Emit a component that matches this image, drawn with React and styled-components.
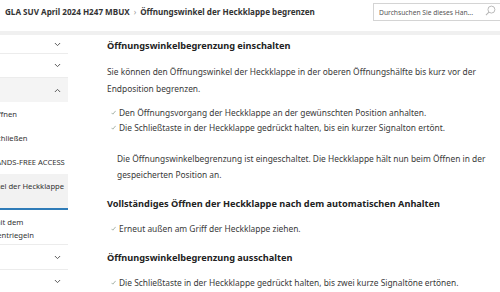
import styled, { createGlobalStyle } from "styled-components";

const GlobalStyle = createGlobalStyle`
  * { box-sizing: border-box; }
  html, body { margin: 0; padding: 0; background: #fff; }
  body {
    width: 500px;
    height: 292px;
    overflow: hidden;
    font-family: "Noto Sans", "Open Sans", sans-serif;
    color: #333;
  }
`;

const sideItems = [
  { type: "top", label: "Schlüssel", h: 19 },
  { type: "top", label: "Türen", h: 24 },
  { type: "open", label: "Heckklappe", h: 24 },
  { type: "sub", label: "Heckklappe öffnen" },
  { type: "sub", label: "Heckklappe schließen" },
  { type: "sub", label: "Öffnen mit HANDS-FREE ACCESS" },
  { type: "active", label: "Öffnungswinkel der Heckklappe begrenzen" },
  { type: "sub2", label: "Heckklappe mit dem Notschlüssel entriegeln" },
  { type: "top", label: "Fenster", h: 26, first: true },
  { type: "top", label: "Schiebedach", h: 24 },
];

const steps1 = [
  "Den Öffnungsvorgang der Heckklappe an der gewünschten Position anhalten.",
  "Die Schließtaste in der Heckklappe gedrückt halten, bis ein kurzer Signalton ertönt.",
];

export default function App() {
  return (
    <>
      <GlobalStyle />
      <Page>
        <Header>
          <Breadcrumb>
            <Crumb>GLA SUV April 2024 H247 MBUX</Crumb>
            <Sep>›</Sep>
            <Crumb>Öffnungswinkel der Heckklappe begrenzen</Crumb>
          </Breadcrumb>
          <SearchBox>
            <SearchText>Durchsuchen Sie dieses Han...</SearchText>
            <SearchIcon />
          </SearchBox>
        </Header>
        <Body>
          <Sidebar>
            <SideList>
              {sideItems.map((it) =>
                it.type === "top" || it.type === "open" ? (
                  <TopItem key={it.label} $h={it.h} $open={it.type === "open"} $first={it.first}>
                    <TopLabel>{it.label}</TopLabel>
                    <Chevron up={it.type === "open"} />
                  </TopItem>
                ) : (
                  <SubItem key={it.label} $active={it.type === "active"} $multi={it.type !== "sub"}>
                    {it.label}
                  </SubItem>
                )
              )}
            </SideList>
          </Sidebar>
          <Main>
            <Heading>Öffnungswinkelbegrenzung einschalten</Heading>
            <Text>
              Sie können den Öffnungswinkel der Heckklappe in der oberen Öffnungshälfte bis kurz vor der
              Endposition begrenzen.
            </Text>
            <Steps>
              {steps1.map((s) => (
                <Step key={s}>
                  <Check />
                  <span>{s}</span>
                </Step>
              ))}
            </Steps>
            <Note>
              Die Öffnungswinkelbegrenzung ist eingeschaltet. Die Heckklappe hält nun beim Öffnen in der
              gespeicherten Position an.
            </Note>
            <Heading>Vollständiges Öffnen der Heckklappe nach dem automatischen Anhalten</Heading>
            <Steps>
              <Step>
                <Check />
                <span>Erneut außen am Griff der Heckklappe ziehen.</span>
              </Step>
            </Steps>
            <Heading>Öffnungswinkelbegrenzung ausschalten</Heading>
            <Steps>
              <Step>
                <Check />
                <span>Die Schließtaste in der Heckklappe gedrückt halten, bis zwei kurze Signaltöne ertönen.</span>
              </Step>
            </Steps>
          </Main>
        </Body>
      </Page>
    </>
  );
}

function Chevron({ up }) {
  return (
    <ChevronSvg viewBox="0 0 8 5" width="7" height="5">
      <polyline
        points={up ? "1,4.2 4,1.2 7,4.2" : "1,0.8 4,3.8 7,0.8"}
        fill="none"
        stroke="#555"
        strokeWidth="1.1"
      />
    </ChevronSvg>
  );
}

function Check() {
  return (
    <CheckSvg viewBox="0 0 6 6" width="5" height="5">
      <polyline points="0.6,3.4 2.2,5 5.6,1" fill="none" stroke="#8a9c8e" strokeWidth="0.9" />
    </CheckSvg>
  );
}

function SearchIcon() {
  return (
    <IconSvg viewBox="0 0 12 12" width="11" height="11">
      <circle cx="7" cy="5" r="3.8" fill="none" stroke="#b5b5b5" strokeWidth="1" />
      <line x1="4.3" y1="7.7" x2="1" y2="11" stroke="#b5b5b5" strokeWidth="1.1" />
    </IconSvg>
  );
}

const Page = styled.div`
  display: flex;
  flex-direction: column;
  height: 292px;
`;

const Header = styled.header`
  height: 35px;
  flex-shrink: 0;
  display: flex;
  align-items: flex-start;
  justify-content: space-between;
  padding: 3px 0 0 5px;
  border-bottom: 4px solid #f0f0f0;
`;

const Breadcrumb = styled.div`
  display: flex;
  align-items: center;
  gap: 4px;
  height: 17px;
  font-size: 8.1px;
  font-weight: 700;
  color: #333;
`;

const Crumb = styled.span`
  white-space: nowrap;
`;

const Sep = styled.span`
  color: #999;
  font-weight: 400;
`;

const SearchBox = styled.div`
  width: 133px;
  height: 18px;
  margin-right: -6px;
  flex-shrink: 0;
  display: flex;
  align-items: center;
  padding: 0 9px 0 5px;
  border: 1px solid #d4d4d4;
`;

const SearchText = styled.span`
  font-size: 6.7px;
  color: #555;
  white-space: nowrap;
`;

const IconSvg = styled.svg`
  display: block;
  flex-shrink: 0;
  margin: -4px 0 0 auto;
`;

const Body = styled.div`
  flex: 1;
  display: flex;
  min-height: 0;
`;

const Sidebar = styled.nav`
  width: 68px;
  flex-shrink: 0;
  overflow: hidden;
  display: flex;
  justify-content: flex-end;
`;

const SideList = styled.div`
  flex: 0 0 130px;
  display: flex;
  flex-direction: column;
`;

const TopItem = styled.div`
  height: ${(p) => p.$h}px;
  flex-shrink: 0;
  display: flex;
  align-items: center;
  justify-content: space-between;
  padding: 0 7px 0 12px;
  background: ${(p) => (p.$open ? "#f4f4f4" : "#fff")};
  border-bottom: ${(p) => (p.$open ? "none" : "1px solid #ececec")};
  border-top: ${(p) => (p.$first ? "1px solid #ececec" : "none")};
  font-size: 7.6px;
  font-weight: 700;
`;

const TopLabel = styled.span`
  white-space: nowrap;
`;

const ChevronSvg = styled.svg`
  display: block;
  flex-shrink: 0;
`;

const SubItem = styled.div`
  flex-shrink: 0;
  font-size: 7.6px;
  line-height: ${(p) => (p.$multi ? "12.5px" : "24px")};
  height: ${(p) => (p.$active ? "36px" : p.$multi ? "34px" : "24px")};
  padding: ${(p) => (p.$multi ? "6px 2px 0 12px" : "0 2px 0 12px")};
  overflow: hidden;
  color: #333;
  background: ${(p) => (p.$active ? "#f2f2f2" : "#fff")};
  border-bottom: ${(p) => (p.$active ? "2px solid #2f7cb8" : "none")};
  white-space: ${(p) => (p.$multi ? "normal" : "nowrap")};
`;

const Main = styled.main`
  flex: 1;
  padding: 4px 14px 0 39px;
  font-size: 8.4px;
  color: #3a3a3a;
`;

const Heading = styled.h2`
  margin: 0 0 10px;
  font-size: 9.2px;
  line-height: 14px;
  font-weight: 700;
  color: #222;
`;

const Text = styled.p`
  margin: 3.5px 0 8px;
  line-height: 17px;
`;

const Steps = styled.ul`
  list-style: none;
  margin: 0 0 15.5px;
  padding: 0;
`;

const Step = styled.li`
  display: flex;
  align-items: center;
  gap: 3px;
  padding-left: 4px;
  line-height: 15px;
  white-space: nowrap;
`;

const CheckSvg = styled.svg`
  display: block;
  flex-shrink: 0;
`;

const Note = styled.p`
  margin: 0 0 14px;
  padding-left: 10px;
  line-height: 16px;
`;
